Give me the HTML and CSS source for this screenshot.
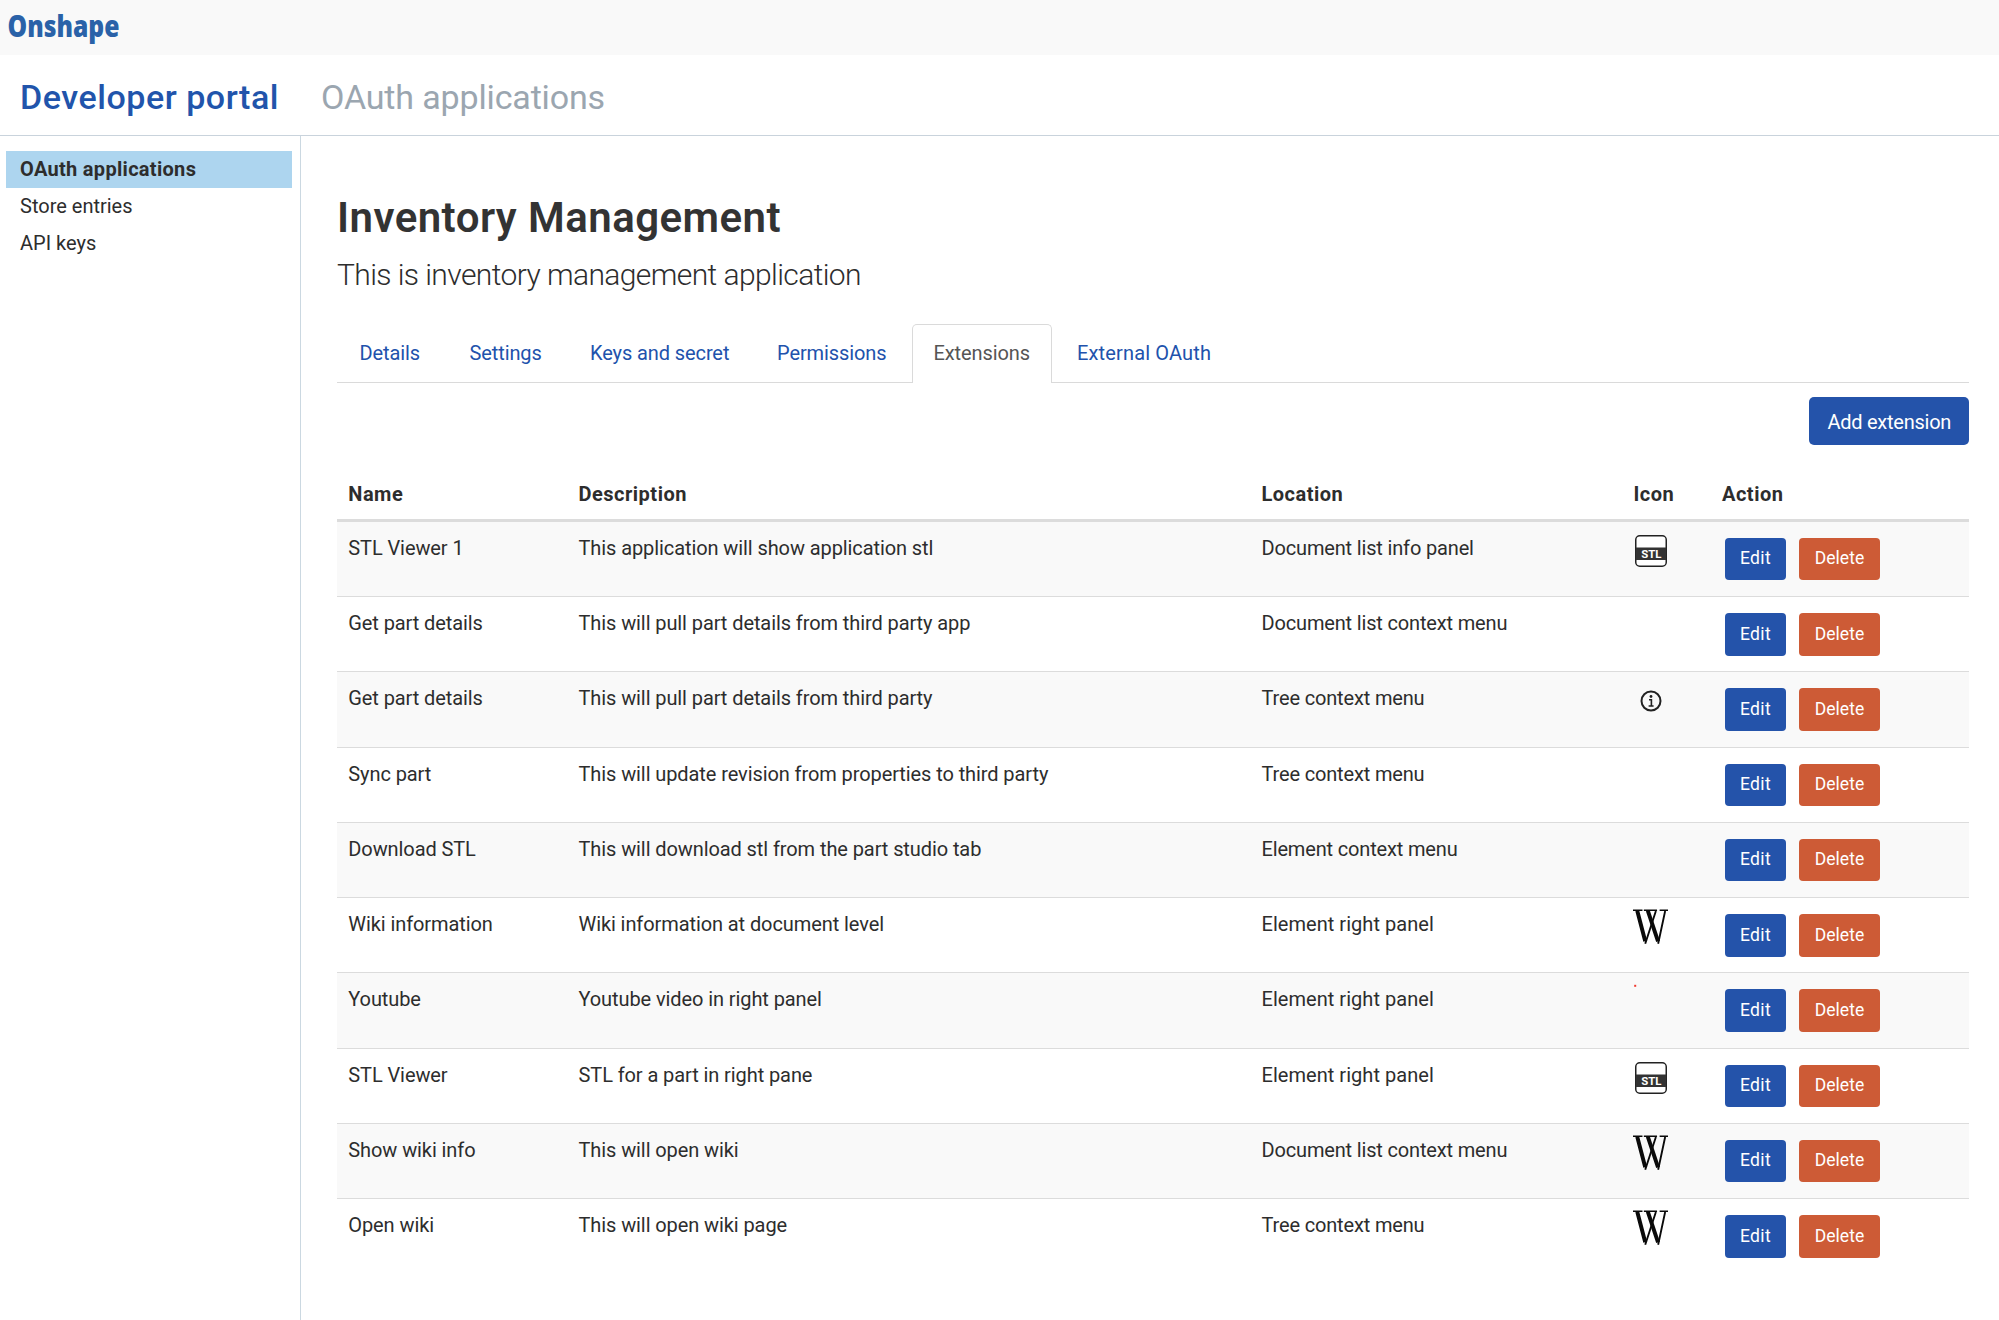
FILE: index.html
```html
<!DOCTYPE html>
<html lang="en">
<head>
<meta charset="utf-8">
<title>Developer portal - OAuth applications</title>
<link rel="stylesheet" href="styles.css">
</head>
<body>
<svg class="defs" width="0" height="0" aria-hidden="true">
  <symbol id="stl" viewBox="0 0 32 32">
    <rect x="0.75" y="0.75" width="30.5" height="30.5" rx="4" fill="#fff" stroke="#222" stroke-width="1.5"/>
    <rect x="0.75" y="12.5" width="30.5" height="12.5" fill="#333"/>
    <text x="6.3" y="23.3" textLength="20" lengthAdjust="spacingAndGlyphs" class="stl-label">STL</text>
  </symbol>
  <symbol id="info" viewBox="0 0 32 32">
    <circle cx="16" cy="16" r="9.5" fill="none" stroke="#222" stroke-width="2"/>
    <circle cx="16" cy="11.5" r="1.4" fill="#222"/>
    <path d="M14 14.8h2.4v5.9M13.6 21h5" fill="none" stroke="#222" stroke-width="1.6"/>
  </symbol>
  <symbol id="wiki" viewBox="0 0 36 36">
    <g fill="none" stroke="#0a0a0a">
      <path d="M0 1.1h9.6M11 1.1h13.4M27 1.1h8.8" stroke-width="1.6"/>
      <path d="M4.3 1.5L12.4 32.5M15 1.5L25.4 32.5" stroke-width="4"/>
      <path d="M12.4 35L23.2 1.8M25.5 35L32.6 1.8" stroke-width="1.9"/>
    </g>
  </symbol>
  <symbol id="dot" viewBox="0 0 32 32">
    <rect x="-0.8" y="-1.2" width="2" height="2" fill="#f03a30"/>
  </symbol>
</svg>

<header class="topbar">
  <svg class="logo" width="200" height="55" role="img" aria-label="Onshape"><text x="7.5" y="37.4" textLength="112" lengthAdjust="spacingAndGlyphs">Onshape</text></svg>
</header>
<div class="heading">
  <span class="portal">Developer portal</span>
  <span class="crumb">OAuth applications</span>
</div>

<div class="body">
  <nav class="sidebar">
    <a class="item active">OAuth applications</a>
    <a class="item">Store entries</a>
    <a class="item">API keys</a>
  </nav>

  <main class="main">
    <h1 class="title">Inventory Management</h1>
    <p class="subtitle">This is inventory management application</p>

    <div class="tabs">
      <a class="tab">Details</a>
      <a class="tab">Settings</a>
      <a class="tab">Keys and secret</a>
      <a class="tab">Permissions</a>
      <a class="tab current">Extensions</a>
      <a class="tab external">External OAuth</a>
    </div>

    <div class="toolbar"><button class="btn add">Add extension</button></div>

    <div class="table">
      <div class="row head"><span>Name</span><span>Description</span><span>Location</span><span>Icon</span><span>Action</span></div>
      <div class="row"><span>STL Viewer 1</span><span>This application will show application stl</span><span class="loc">Document list info panel</span><span class="icon"><svg><use href="#stl"/></svg></span><span class="actions"><button class="btn edit">Edit</button><button class="btn delete">Delete</button></span></div>
      <div class="row"><span>Get part details</span><span>This will pull part details from third party app</span><span class="loc">Document list context menu</span><span class="icon"></span><span class="actions"><button class="btn edit">Edit</button><button class="btn delete">Delete</button></span></div>
      <div class="row"><span>Get part details</span><span>This will pull part details from third party</span><span class="loc">Tree context menu</span><span class="icon"><svg><use href="#info"/></svg></span><span class="actions"><button class="btn edit">Edit</button><button class="btn delete">Delete</button></span></div>
      <div class="row"><span>Sync part</span><span>This will update revision from properties to third party</span><span class="loc">Tree context menu</span><span class="icon"></span><span class="actions"><button class="btn edit">Edit</button><button class="btn delete">Delete</button></span></div>
      <div class="row"><span>Download STL</span><span>This will download stl from the part studio tab</span><span class="loc">Element context menu</span><span class="icon"></span><span class="actions"><button class="btn edit">Edit</button><button class="btn delete">Delete</button></span></div>
      <div class="row"><span>Wiki information</span><span>Wiki information at document level</span><span class="loc panel">Element right panel</span><span class="icon"><svg class="w"><use href="#wiki"/></svg></span><span class="actions"><button class="btn edit">Edit</button><button class="btn delete">Delete</button></span></div>
      <div class="row"><span>Youtube</span><span>Youtube video in right panel</span><span class="loc panel">Element right panel</span><span class="icon"><svg class="dot"><use href="#dot"/></svg></span><span class="actions"><button class="btn edit">Edit</button><button class="btn delete">Delete</button></span></div>
      <div class="row"><span>STL Viewer</span><span>STL for a part in right pane</span><span class="loc panel">Element right panel</span><span class="icon"><svg><use href="#stl"/></svg></span><span class="actions"><button class="btn edit">Edit</button><button class="btn delete">Delete</button></span></div>
      <div class="row"><span>Show wiki info</span><span>This will open wiki</span><span class="loc">Document list context menu</span><span class="icon"><svg class="w"><use href="#wiki"/></svg></span><span class="actions"><button class="btn edit">Edit</button><button class="btn delete">Delete</button></span></div>
      <div class="row"><span>Open wiki</span><span>This will open wiki page</span><span class="loc">Tree context menu</span><span class="icon"><svg class="w"><use href="#wiki"/></svg></span><span class="actions"><button class="btn edit">Edit</button><button class="btn delete">Delete</button></span></div>
    </div>
  </main>
</div>
</body>
</html>
```
FILE: styles.css
```css
* { box-sizing: border-box; }

body {
  margin: 0;
  height: 1320px;
  overflow: hidden;
  display: flex;
  flex-direction: column;
  background: #fff;
  color: #2d2d2d;
  font: 400 20px/28.5px Roboto, sans-serif;
}

.defs { display: none; }

.topbar { height: 55px; flex: none; background: #f9f9f9; }
.logo { display: block; overflow: visible; }
.logo text { font: 800 30px "Open Sans", sans-serif; fill: #2a62a8; }

.heading {
  flex: none;
  height: 81px;
  padding: 20px 0 0 20px;
  display: flex;
  gap: 42px;
  border-bottom: 1px solid #c9d3dc;
  font-size: 34px;
  line-height: 45px;
}
.portal { font-weight: 500; color: #2154ab; letter-spacing: 0.54px; }
.crumb { color: #9ba6b0; letter-spacing: -0.15px; }

.body { flex: 1; display: flex; min-height: 0; }

.sidebar {
  width: 301px;
  flex: none;
  padding: 14.5px 8px 0 6px;
  border-right: 1px solid #cbd8e1;
}
.item {
  display: block;
  height: 37px;
  padding-left: 14px;
  line-height: 37px;
}
.item.active { background: #add5ef; font-weight: 700; letter-spacing: 0.3px; }

.main { flex: 1; padding: 0 30px 0 36px; }

.title {
  margin: 57px 0 0;
  font-size: 42px;
  line-height: 50px;
  font-weight: 600;
  letter-spacing: 0.45px;
  color: #333;
}
.subtitle {
  margin: 12px 0 0;
  font-size: 30px;
  line-height: 40px;
  font-weight: 300;
  letter-spacing: -0.59px;
}

.tabs {
  display: grid;
  grid-template-columns: 110px 120.5px 187px 156px 144px auto;
  height: 59px;
  margin-top: 29px;
  padding-left: 1px;
  border-bottom: 1px solid #dadada;
}
.tab {
  height: 59px;
  padding-left: 21.5px;
  line-height: 59px;
  color: #2152ac;
  letter-spacing: -0.1px;
}
.tab.external { letter-spacing: 0.15px; }
.tab.current {
  width: 140px;
  padding-left: 21px;
  line-height: 57px;
  color: #555;
  background: #fff;
  border: 1px solid #dadada;
  border-bottom: 0;
  border-radius: 5px 5px 0 0;
}

.toolbar { display: flex; justify-content: flex-end; height: 76px; padding-top: 14.4px; }

.btn {
  border: 0;
  padding: 0;
  color: #fff;
  background: #2453aa;
  border-radius: 4px;
  font: 400 17.5px/1 Roboto, sans-serif;
}
.add { width: 160.5px; height: 48px; font-size: 20px; letter-spacing: -0.25px; padding: 1px 0 0 1px; border-radius: 5px; }
.edit { width: 61px; height: 42.5px; letter-spacing: 0.4px; }
.delete { width: 81px; height: 42.5px; background: #cd5b36; letter-spacing: 0.05px; }

.row {
  display: grid;
  grid-template-columns: 231px 683px 372px 88.5px 1fr;
  height: 75.25px;
  border-top: 1px solid #dcdcdc;
}
.row > span { padding: 11.9px 0 0 10.5px; letter-spacing: -0.09px; }
.row > span:first-child { padding-left: 11.3px; }
.row > .loc { letter-spacing: -0.16px; }
.row > .loc.panel { letter-spacing: 0.04px; }
.row:nth-child(even) { background: #f9f9f9; }

.row.head { height: 63.4px; border-top: 0; border-bottom: 3px solid #dcdcdc; font-weight: 700; }
.row.head > span { padding-top: 21px; letter-spacing: 0.5px; }
.head + .row { height: 73.85px; border-top: 0; }
.head + .row > span { padding-top: 11.4px; }

.row > .icon, .head + .row > .icon { padding: 13px 0 0 11.5px; }
.head + .row > .icon { padding-top: 12.7px; }
.icon svg { display: block; width: 32px; height: 32px; }
.icon svg.w { width: 35.5px; height: 36px; margin: -2px 0 0 -1.7px; }
.icon svg.dot, #dot { overflow: visible; }
.stl-label { font: 700 11px Roboto, sans-serif; fill: #fff; }

.row > .actions { display: flex; gap: 13px; padding: 16px 0 0 13.5px; }
.head + .row > .actions { padding-top: 15.5px; }
```
